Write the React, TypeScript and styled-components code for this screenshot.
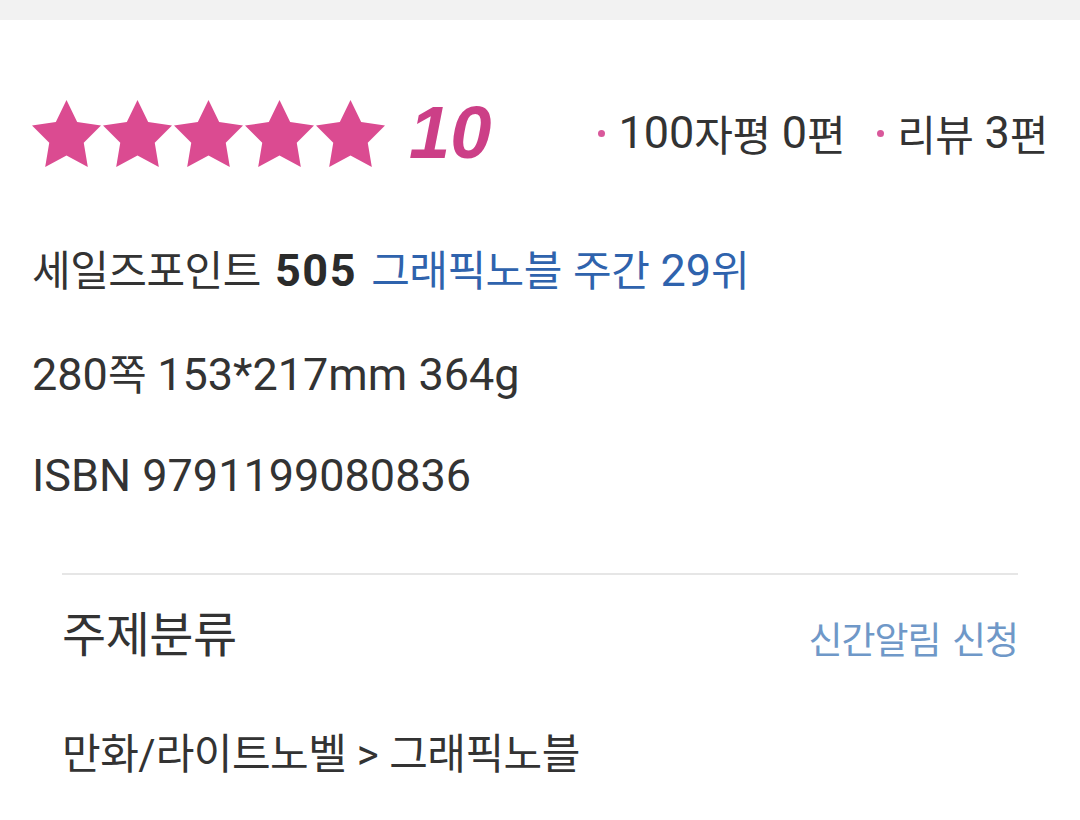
import React from 'react';
import styled, { createGlobalStyle } from 'styled-components';

const GlobalStyle = createGlobalStyle`
  html, body {
    margin: 0;
    padding: 0;
    background: #ffffff;
  }
  body {
    font-family: "Roboto", "Noto Sans CJK KR", sans-serif;
    color: #333333;
  }
`;

const HANGUL = /([\uAC00-\uD7A3]+)/;

// hangul runs get the CJK face, a bit tighter than its default advance
const Txt = ({ children }: { children: string }) => (
  <>
    {children.split(HANGUL).map((part, i) =>
      HANGUL.test(part) ? <Ko key={i}>{part}</Ko> : part
    )}
  </>
);

const Star = () => (
  <StarSvg viewBox="2 2 20 19.02" preserveAspectRatio="none">
    <polygon points="12,2 15.09,8.26 22,9.27 17,14.14 18.18,21.02 12,17.77 5.82,21.02 7,14.14 2,9.27 8.91,8.26" />
  </StarSvg>
);

const App = () => {
  const stats = [
    { label: '100자평', count: '0편' },
    { label: '리뷰', count: '3편' },
  ];

  return (
    <>
      <GlobalStyle />
      <TopBar />
      <Content>
        <RatingRow>
          <Stars>
            {[0, 1, 2, 3, 4].map(i => <Star key={i} />)}
            <Score>10</Score>
          </Stars>
          <Stats>
            {stats.map(s => (
              <Stat key={s.label}>
                <Txt>{`${s.label} ${s.count}`}</Txt>
              </Stat>
            ))}
          </Stats>
        </RatingRow>

        <InfoLine>
          <Txt>세일즈포인트 </Txt>
          <Strong>505</Strong>{' '}
          <RankLink><Txt>그래픽노블 주간 29위</Txt></RankLink>
        </InfoLine>
        <InfoLine>
          <Txt>280쪽 153*217mm 364g</Txt>
        </InfoLine>
        <InfoLine>ISBN 9791199080836</InfoLine>

        <Divider />

        <Category>
          <CategoryHeader>
            <CategoryTitle>주제분류</CategoryTitle>
            <NotifyLink>신간알림 신청</NotifyLink>
          </CategoryHeader>
          <CategoryPath>
            <Txt>만화/라이트노벨 &gt; 그래픽노블</Txt>
          </CategoryPath>
        </Category>
      </Content>
    </>
  );
};

const TopBar = styled.div`
  height: 20px;
  background: #f2f2f2;
`;

const Content = styled.div`
  padding: 0 32px 40px 32px;
`;

const RatingRow = styled.div`
  display: flex;
  align-items: center;
  justify-content: space-between;
  height: 80px;
  margin-top: 73px;
`;

const Stars = styled.div`
  display: flex;
  align-items: center;
  gap: 2px;
`;

const StarSvg = styled.svg`
  width: 69px;
  height: 67px;
  fill: #db4b91;
  display: block;
`;

const Score = styled.span`
  font-family: "Liberation Sans", "Roboto", sans-serif;
  font-weight: 700;
  font-style: italic;
  font-size: 74px;
  line-height: 1;
  color: #cc3f87;
  margin-left: 22px;
`;

const Stats = styled.div`
  display: flex;
  align-items: center;
  gap: 32px;
`;

const Stat = styled.span`
  display: flex;
  align-items: center;
  font-size: 45px;
  line-height: 60px;
  white-space: pre;

  &::before {
    content: '';
    width: 7px;
    height: 7px;
    border-radius: 50%;
    background: #d9589b;
    margin-right: 13px;
  }
`;

const Ko = styled.span`
  font-family: "Noto Sans CJK KR", sans-serif;
  font-size: 42px;
  letter-spacing: -0.5px;
`;

const InfoLine = styled.div`
  font-size: 45px;
  line-height: 60px;
  margin-top: 41px;
  white-space: pre;

  &:nth-of-type(2) {
    margin-top: 65px;
  }
`;

const Strong = styled.b`
  font-weight: 700;
  color: #2b2b2b;
  letter-spacing: 1.5px;
  margin: 0 3px;
`;

const RankLink = styled.span`
  color: #2f63ad;
`;

const Divider = styled.hr`
  border: none;
  height: 2px;
  background: #e6e6e6;
  margin: 67px 30px 0 30px;
`;

const Category = styled.div`
  padding: 0 30px;
`;

const CategoryHeader = styled.div`
  display: flex;
  align-items: center;
  justify-content: space-between;
  margin-top: 24px;
  height: 64px;
  font-family: "Noto Sans CJK KR", sans-serif;
`;

const CategoryTitle = styled.span`
  font-size: 48px;
  letter-spacing: -0.5px;
  color: #333333;
`;

const NotifyLink = styled.span`
  font-size: 37px;
  letter-spacing: -1px;
  word-spacing: 4px;
  color: #6f98c8;
  margin-top: 14px;
`;

const CategoryPath = styled.div`
  font-size: 42px;
  line-height: 60px;
  margin-top: 58px;
  white-space: pre;
`;

export default App;
